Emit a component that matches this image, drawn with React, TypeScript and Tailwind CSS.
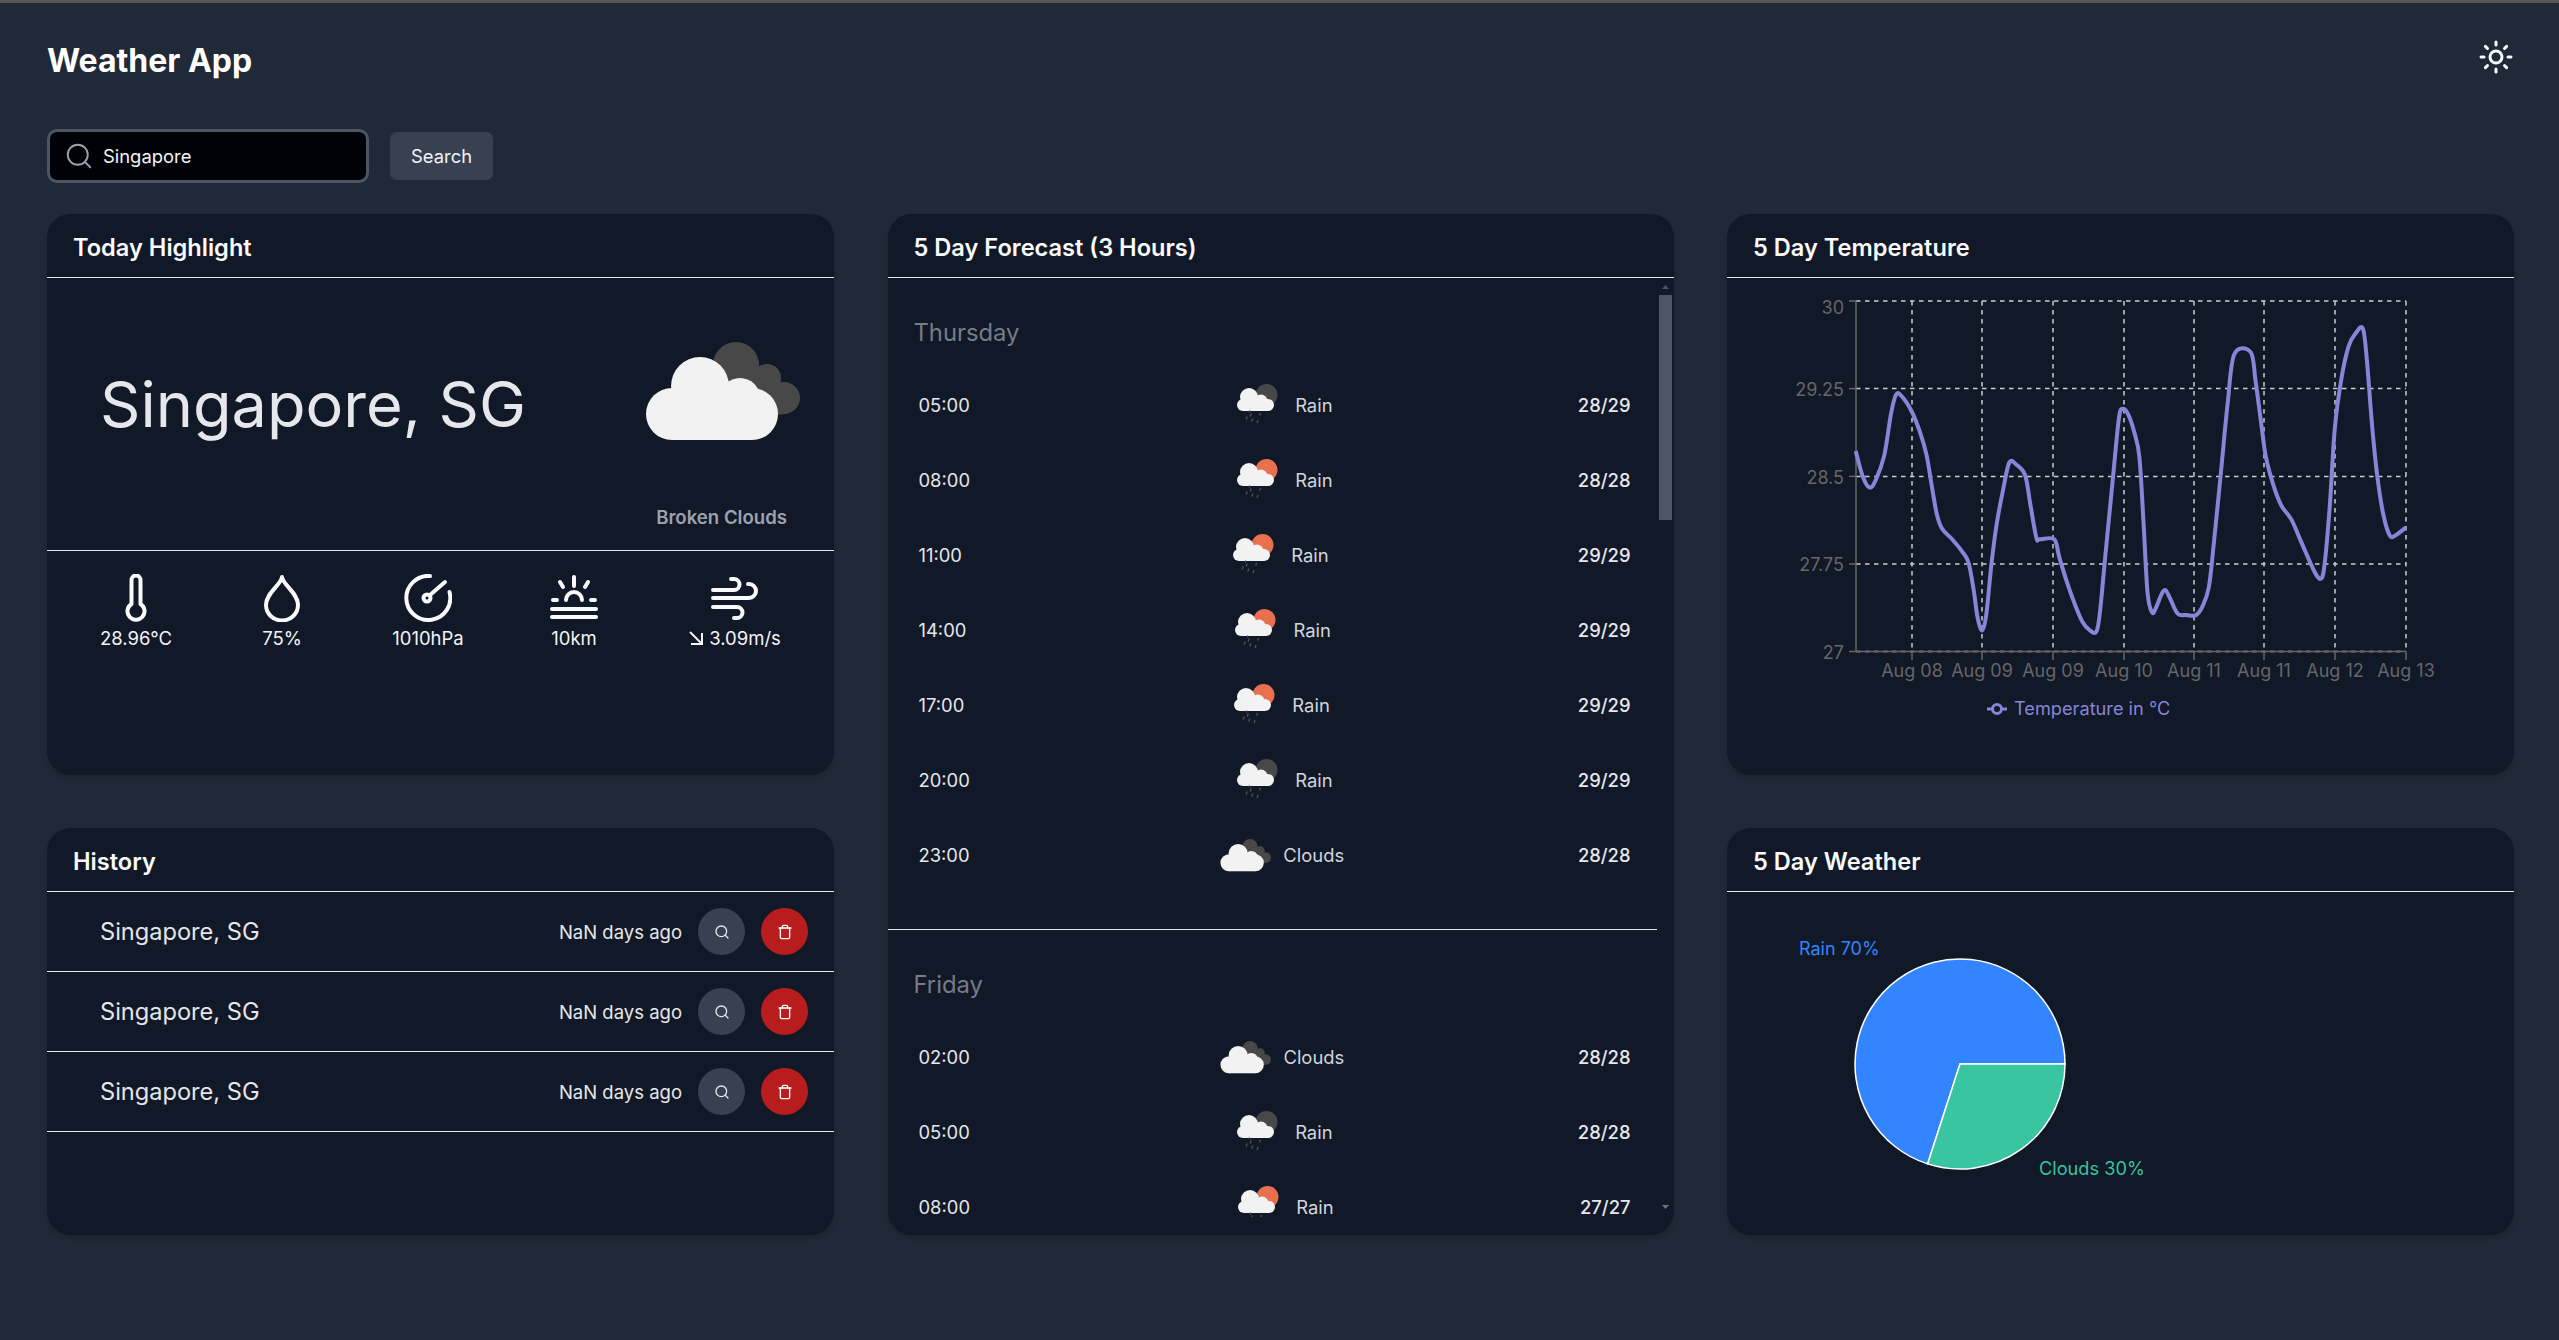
import { FC, ReactNode } from "react"
import { Search, Sun, Trash } from "lucide-react"

// traced from the temperature curve, page coordinates are worked out below
const curve: [number, number][] = [
  [266, 703], [280, 775], [293, 805], [305, 785], [322, 715], [335, 600], [345, 545], [355, 548],
  [375, 590], [392, 650], [405, 715], [415, 800], [425, 880], [435, 920], [455, 950], [475, 985],
  [487, 1015], [497, 1090], [505, 1170], [514, 1205], [522, 1160], [532, 1020], [542, 910], [555, 810],
  [567, 735], [580, 740], [598, 770], [608, 850], [620, 945], [627, 950], [655, 950], [665, 1000],
  [680, 1070], [695, 1130], [710, 1180], [725, 1205], [738, 1208], [745, 1150], [755, 1000], [770, 780],
  [782, 610], [790, 585], [800, 600], [812, 650], [822, 720], [830, 900], [838, 1100], [847, 1155],
  [855, 1140], [865, 1105], [873, 1092], [882, 1115], [897, 1158], [915, 1162], [932, 1163], [945, 1140],
  [958, 1085], [968, 960], [982, 760], [995, 570], [1008, 432], [1040, 426], [1050, 510], [1062, 640],
  [1070, 720], [1085, 800], [1100, 855], [1120, 895], [1140, 960], [1165, 1040], [1178, 1060], [1185, 1020],
  [1195, 860], [1205, 640], [1218, 500], [1232, 410], [1245, 375], [1260, 360], [1268, 450], [1278, 630],
  [1288, 770], [1300, 880], [1313, 940], [1325, 938], [1344, 917],
]

const curvePath = () => {
  const pts = curve.map(([x, y]) => [1720 + x / 1.96, 200 + y / 2.8])
  let d = `M${pts[0][0]} ${pts[0][1]}`
  for (let i = 0; i < pts.length - 1; i++) {
    const p0 = pts[Math.max(i - 1, 0)]
    const p1 = pts[i]
    const p2 = pts[i + 1]
    const p3 = pts[Math.min(i + 2, pts.length - 1)]
    d += ` C${p1[0] + (p2[0] - p0[0]) / 6} ${p1[1] + (p2[1] - p0[1]) / 6} ${p2[0] - (p3[0] - p1[0]) / 6} ${p2[1] - (p3[1] - p1[1]) / 6} ${p2[0]} ${p2[1]}`
  }
  return d
}

const xTicks = [
  [1912, "Aug 08"], [1982, "Aug 09"], [2053, "Aug 09"], [2124, "Aug 10"],
  [2194, "Aug 11"], [2264, "Aug 11"], [2335, "Aug 12"], [2406, "Aug 13"],
] as const
const yTicks = [
  [301, 307, "30"], [388.6, 389, "29.25"], [476.4, 477, "28.5"], [564, 564, "27.75"], [651.5, 652, "27"],
] as const

type Hour = { time: string; kind: "rain-night" | "rain-day" | "clouds"; temp: string }

const days: { name: string; hours: Hour[] }[] = [
  {
    name: "Thursday",
    hours: [
      { time: "05:00", kind: "rain-night", temp: "28/29" },
      { time: "08:00", kind: "rain-day", temp: "28/28" },
      { time: "11:00", kind: "rain-day", temp: "29/29" },
      { time: "14:00", kind: "rain-day", temp: "29/29" },
      { time: "17:00", kind: "rain-day", temp: "29/29" },
      { time: "20:00", kind: "rain-night", temp: "29/29" },
      { time: "23:00", kind: "clouds", temp: "28/28" },
    ],
  },
  {
    name: "Friday",
    hours: [
      { time: "02:00", kind: "clouds", temp: "28/28" },
      { time: "05:00", kind: "rain-night", temp: "28/28" },
      { time: "08:00", kind: "rain-day", temp: "27/27" },
    ],
  },
]

const CloudsIcon: FC<{ className: string; viewBox: string }> = ({ className, viewBox }) => (
  <svg className={className} viewBox={viewBox}>
    <g fill="#484848">
      <circle cx="736" cy="365" r="23" />
      <circle cx="767" cy="378" r="14" />
      <circle cx="784" cy="398" r="16" />
      <path d="M720 370 L770 365 L785 414 L745 420Z" />
    </g>
    <g fill="#f2f2f2">
      <circle cx="700" cy="386" r="29" />
      <circle cx="672" cy="414" r="26" />
      <circle cx="752" cy="414" r="26" />
      <circle cx="740" cy="398" r="20" />
      <rect x="672" y="395" width="80" height="45" />
    </g>
  </svg>
)

const RainIcon: FC<{ sun: string }> = ({ sun }) => (
  <svg className="w-[72px] h-[72px] shrink-0" viewBox="0 0 72 72">
    <circle cx="51.5" cy="26" r="11" fill={sun} />
    <g fill="#f2f2f2">
      <circle cx="34" cy="28" r="9" />
      <circle cx="28" cy="36" r="6" />
      <circle cx="53" cy="36" r="6" />
      <circle cx="46" cy="32" r="6.5" />
      <rect x="28" y="32" width="25" height="10" />
    </g>
    <g stroke="#4d4d4d" strokeWidth="1.5" strokeLinecap="round">
      <path d="M34.5 42 V43" />
      <path d="M36 45 L35.4 47" />
      <path d="M32 48 L31.4 50" />
      <path d="M45.4 44.5 L44.9 46" />
      <path d="M42.8 51.5 L42.2 53.5" />
      <path d="M37.6 50 L37 52" />
    </g>
  </svg>
)

const HourIcon: FC<{ kind: Hour["kind"] }> = ({ kind }) => {
  if (kind === "clouds") return <CloudsIcon className="w-[72px] h-[72px] shrink-0" viewBox="593 281 219 219" />
  return <RainIcon sun={kind === "rain-day" ? "#e8704f" : "#484848"} />
}

const Card: FC<{ title: string; className?: string; children: ReactNode }> = ({ title, className, children }) => (
  <div className={`bg-[#111827] rounded-[24px] shadow-md overflow-hidden ${className ?? ""}`}>
    <div className="h-[64px] flex items-center pl-[26px] pt-[4px] border-b border-[#e5e7eb] text-[23.6px] font-semibold text-[#f9fafb]">
      {title}
    </div>
    {children}
  </div>
)

const Stat: FC<{ label: ReactNode; children: ReactNode }> = ({ label, children }) => (
  <div className="flex flex-col items-center">
    <svg
      className="w-12 h-12"
      viewBox="0 0 48 48"
      fill="none"
      stroke="#f9fafb"
      strokeWidth="4"
      strokeLinecap="round"
      strokeLinejoin="round"
    >
      {children}
    </svg>
    <div className="mt-[2px] text-[18.5px] leading-[28px] text-[#f3f4f6] flex items-center gap-[6px]">{label}</div>
  </div>
)

const TodayHighlight = () => (
  <Card title="Today Highlight">
    <div className="h-[273px] pt-[59px] border-b border-[#e5e7eb]">
      <div className="h-[108px] pl-[53px] pr-[29px] flex items-center justify-between">
        <div className="pt-[26px] text-[63px] leading-[108px] text-[#e5e7eb]">Singapore, SG</div>
        <CloudsIcon className="w-[165px] h-[108px]" viewBox="640 337 165 108" />
      </div>
      <div className="mt-[58px] pr-[47px] text-right text-[18.6px] leading-[28px] font-semibold text-[#9ca3af]">
        Broken Clouds
      </div>
    </div>
    <div className="pt-[23px] pl-[16px] grid grid-cols-[146px_146px_146px_146px_176px]">
      <Stat label="28.96°C">
        <path d="M19.5 30 V6 a4.5 4.5 0 0 1 9 0 V30 a8.5 8.5 0 1 1 -9 0 Z" />
      </Stat>
      <Stat label="75%">
        <path d="M24 3 C25 11 40 19 40 31 A16 15.5 0 0 1 8 31 C8 19 23 11 24 3Z" />
      </Stat>
      <Stat label="1010hPa">
        <path d="M26 2 A22 22 0 1 0 45.5 18" />
        <circle cx="23" cy="24" r="3.5" />
        <path d="M26 21 L41 8" />
      </Stat>
      <Stat label="10km">
        <path d="M2 35 H46 M2 43 H46 M3 26 H7 M41 26 H45 M16 26 a8 8 0 0 1 16 0 M24 3 V12 M10 8 L13 13 M38 8 L35 13" />
      </Stat>
      <Stat
        label={
          <>
            <svg className="w-[14px] h-[14px]" viewBox="0 0 14 14" fill="none" stroke="#f3f4f6" strokeWidth="2">
              <path d="M1 1 L13 13 M13 2 V13 H2" />
            </svg>
            3.09m/s
          </>
        }
      >
        <path d="M2 16 H23 a5.5 5.5 0 0 0 0 -11 h-3 M2 24 H38 a7 7 0 0 0 0 -14 h-1 M2 33 H26 a5.5 5.5 0 0 1 0 11 h-3" />
      </Stat>
    </div>
  </Card>
)

const Forecast = () => (
  <Card title="5 Day Forecast (3 Hours)" className="row-span-2">
    <div className="relative h-[939px] overflow-hidden">
      <div className="mr-[17px]">
        {days.map((day) => (
          <div key={day.name} className="pt-[37px] pb-[37px] border-b border-[#e5e7eb] text-[18.4px]">
            <div className="pl-[26px] text-[23.8px] leading-[36px] text-[#767c88] mb-[16px]">{day.name}</div>
            {day.hours.map((hour, i) => (
              <div key={i} className="h-[75px] pl-[31px] pr-[26px] flex items-center justify-between leading-[20px]">
                <span className="text-[#e5e7eb]">{hour.time}</span>
                <span className="flex items-center gap-[8px] text-[#d1d5db]">
                  <HourIcon kind={hour.kind} />
                  {hour.kind === "clouds" ? "Clouds" : "Rain"}
                </span>
                <span className="font-medium text-[#e5e7eb]">{hour.temp}</span>
              </div>
            ))}
          </div>
        ))}
      </div>
      <svg className="absolute right-[5px] top-[7px] w-[7px] h-[4px]" viewBox="0 0 7 4">
        <path d="M3.5 0 L7 4 H0Z" fill="#4b5563" />
      </svg>
      <div className="absolute right-[2px] top-[17px] w-[13px] h-[225px] bg-[#4b5563]" />
      <svg className="absolute right-[5px] bottom-[8px] w-[7px] h-[4px]" viewBox="0 0 7 4">
        <path d="M3.5 4 L7 0 H0Z" fill="#6b7280" />
      </svg>
    </div>
  </Card>
)

const TemperatureChart = () => (
  <Card title="5 Day Temperature">
    <svg className="block w-full h-[497px]" viewBox="1727 278 787 497" style={{ fontFamily: "Inter, sans-serif" }}>
      <g stroke="#cccccc" strokeWidth="1.5" strokeDasharray="4.5 4.5" fill="none">
        {yTicks.map(([y]) => (
          <path key={y} d={`M1856 ${y} H2406`} />
        ))}
        {xTicks.map(([x], i) => (
          <path key={i} d={`M${x} 301 V651.5`} />
        ))}
      </g>
      <g stroke="#666666" strokeWidth="1.5">
        <path d="M1856 301 V651.5 H2406" fill="none" />
        {yTicks.map(([y]) => (
          <path key={y} d={`M1849 ${y} H1856`} />
        ))}
        {xTicks.map(([x], i) => (
          <path key={i} d={`M${x} 651.5 V660`} />
        ))}
      </g>
      <g fill="#666666" fontSize="18">
        {yTicks.map(([y, ty, label]) => (
          <text key={label} x="1844" y={ty} textAnchor="end" dominantBaseline="central">
            {label}
          </text>
        ))}
        {xTicks.map(([x, label], i) => (
          <text key={i} x={x} y="670" textAnchor="middle" dominantBaseline="central">
            {label}
          </text>
        ))}
      </g>
      <path d={curvePath()} fill="none" stroke="#8884d8" strokeWidth="4" strokeLinejoin="round" />
      <path d="M1987 709 H2007" stroke="#8884d8" strokeWidth="3" />
      <circle cx="1997" cy="709" r="4.5" fill="#111827" stroke="#8884d8" strokeWidth="3" />
      <text x="2014" y="708" fill="#8884d8" fontSize="18.2" dominantBaseline="central">
        Temperature in °C
      </text>
    </svg>
  </Card>
)

const History = () => (
  <Card title="History">
    {[0, 1, 2].map((i) => (
      <div key={i} className="h-[80px] border-b border-[#e5e7eb] pl-[53px] pr-[26px] flex items-center justify-between">
        <span className="text-[23.6px] text-[#e5e7eb]">Singapore, SG</span>
        <span className="flex items-center">
          <span className="pt-[2px] text-[18.5px] text-[#e5e7eb] mr-[16px]">NaN days ago</span>
          <button className="w-[47px] h-[47px] rounded-full bg-[#374151] text-[#e5e7eb] flex items-center justify-center mr-[16px]">
            <Search size={16} strokeWidth={2} />
          </button>
          <button className="w-[47px] h-[47px] rounded-full bg-[#b91c1c] text-white flex items-center justify-center">
            <Trash size={16} strokeWidth={2} />
          </button>
        </span>
      </div>
    ))}
  </Card>
)

const WeatherPie = () => (
  <Card title="5 Day Weather">
    <svg className="block w-full h-[343px]" viewBox="1727 892 787 343" style={{ fontFamily: "Inter, sans-serif" }}>
      <path d="M1960 1064 L2065 1064 A105 105 0 1 0 1927.6 1163.9 Z" fill="#3385ff" stroke="#ffffff" strokeWidth="1.5" />
      <path d="M1960 1064 L1927.6 1163.9 A105 105 0 0 0 2065 1064 Z" fill="#38c59f" stroke="#ffffff" strokeWidth="1.5" />
      <text x="1799" y="948" fill="#3385ff" fontSize="18" dominantBaseline="central">
        Rain 70%
      </text>
      <text x="2039" y="1168" fill="#38c59f" fontSize="18.2" dominantBaseline="central">
        Clouds 30%
      </text>
    </svg>
  </Card>
)

export default function App() {
  return (
    <div className="min-h-screen bg-[#1f2937] border-t-[3px] border-[#555555] pl-[47px] pr-[45px] font-['Inter',sans-serif]">
      <header className="h-[114px] flex items-center justify-between pb-[6px]">
        <h1 className="mt-[7px] text-[32px] font-bold text-white">Weather App</h1>
        <Sun size={36} strokeWidth={2} className="text-[#f9fafb]" />
      </header>
      <div className="h-[97px] flex items-start gap-[21px] pt-[12px]">
        <label className="w-[322px] h-[54px] flex items-center gap-[9px] pl-[14px] rounded-[10px] border-[3px] border-[#4b5563] bg-[#010208]">
          <Search size={30} strokeWidth={1.5} className="text-[#9ca3af]" />
          <input
            defaultValue="Singapore"
            className="pt-[2px] bg-transparent text-[18.4px] text-[#f3f4f6] outline-none w-[240px]"
          />
        </label>
        <button className="mt-[3px] pt-[2px] h-[48px] w-[103px] rounded-[7px] bg-[#374151] text-[18.4px] text-[#f3f4f6]">
          Search
        </button>
      </div>
      <main className="grid grid-cols-[787px_786px_787px] grid-rows-[561px_407px] gap-x-[53.5px] gap-y-[53px]">
        <TodayHighlight />
        <Forecast />
        <TemperatureChart />
        <History />
        <WeatherPie />
      </main>
    </div>
  )
}
